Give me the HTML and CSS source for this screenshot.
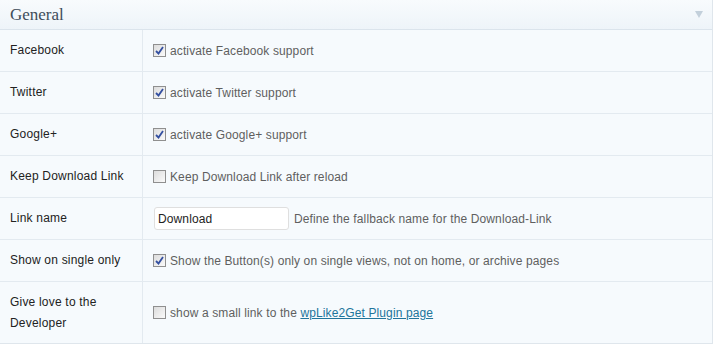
FILE: index.html
```html
<!DOCTYPE html>
<html lang="en">
<head>
    <meta charset="UTF-8">
    <title>wpLike2Get Settings</title>
    <link rel="stylesheet" href="styles.css">
</head>
<body>
    <div class="postbox">
        <h3 class="hndle">
            <span>General</span>
            <span class="handlediv"></span>
        </h3>
        <table class="form-table">
            <tr>
                <th>Facebook</th>
                <td><label><span class="check checked"></span><span>activate Facebook support</span></label></td>
            </tr>
            <tr>
                <th>Twitter</th>
                <td><label><span class="check checked"></span><span>activate Twitter support</span></label></td>
            </tr>
            <tr>
                <th>Google+</th>
                <td><label><span class="check checked"></span><span>activate Google+ support</span></label></td>
            </tr>
            <tr>
                <th>Keep Download Link</th>
                <td><label><span class="check"></span><span>Keep Download Link after reload</span></label></td>
            </tr>
            <tr>
                <th>Link name</th>
                <td><input type="text" class="regular-text" value="Download"><span class="description">Define the fallback name for the Download-Link</span></td>
            </tr>
            <tr>
                <th>Show on single only</th>
                <td><label><span class="check checked"></span><span>Show the Button(s) only on single views, not on home, or archive pages</span></label></td>
            </tr>
            <tr class="last">
                <th>Give love to the<br>Developer</th>
                <td><label><span class="check"></span><span>show a small link to the <a href="#">wpLike2Get Plugin page</a></span></label></td>
            </tr>
        </table>
    </div>
</body>
</html>
```

FILE: styles.css
```css
body {
    margin: 0;
    font-family: "Liberation Sans", Arial, sans-serif;
    font-size: 12px;
    letter-spacing: 0.12px;
    background: #fff;
}
.postbox {
    width: 712px;
    border-right: 1px solid #dfe6ec;
    border-bottom: 1px solid #dfe6ec;
    background-color: #f6fafd;
}
.hndle {
    display: flex;
    justify-content: space-between;
    align-items: center;
    height: 29px;
    margin: 0;
    padding: 0 10px;
    border-bottom: 1px solid #dbe4ec;
    background: linear-gradient(to bottom, #f8fbfd, #eef4f9);
    font-family: "Liberation Serif", Georgia, serif;
    font-size: 17px;
    font-weight: normal;
    letter-spacing: 0;
    color: #3f4d5a;
}
.handlediv {
    width: 0;
    height: 0;
    margin-right: -1px;
    border-left: 4px solid transparent;
    border-right: 4px solid transparent;
    border-top: 7px solid #c3d0db;
}
.form-table {
    width: 100%;
    border-collapse: collapse;
}
.form-table th, .form-table td {
    height: 41px;
    padding: 0 10px;
    border-bottom: 1px solid #e3eaf0;
    text-align: left;
    vertical-align: middle;
    color: #222;
}
.form-table th {
    width: 122px;
    font-weight: normal;
    border-right: 1px solid #e3eaf0;
    line-height: 21px;
    letter-spacing: 0.2px;
}
.form-table td {
    color: #5f5f5f;
}
.form-table tr.last th, .form-table tr.last td {
    height: 61px;
    border-bottom: none;
}
.form-table label {
    display: flex;
    align-items: center;
}
.check {
    display: inline-block;
    box-sizing: border-box;
    width: 13px;
    height: 13px;
    margin-right: 4px;
    border: 1px solid #8f8f8f;
    background: linear-gradient(135deg, #dcdcdc, #fafafa);
}
.check.checked {
    background: url("data:image/svg+xml;utf8,<svg xmlns='http://www.w3.org/2000/svg' width='11' height='11'><path d='M2 6 L4.5 8.5 L9 2' fill='none' stroke='%23334fa0' stroke-width='1.8'/></svg>") no-repeat center, linear-gradient(135deg, #dcdcdc, #fafafa);
}
.regular-text {
    box-sizing: border-box;
    width: 135px;
    height: 23px;
    margin: 0 5px 0 1px;
    padding: 0 3px;
    border: 1px solid #dfdfdf;
    border-radius: 3px;
    background: #fff;
    font-family: "Liberation Sans", Arial, sans-serif;
    font-size: 12px;
    letter-spacing: 0.12px;
    color: #222;
}
.form-table a {
    color: #21759b;
}
```
